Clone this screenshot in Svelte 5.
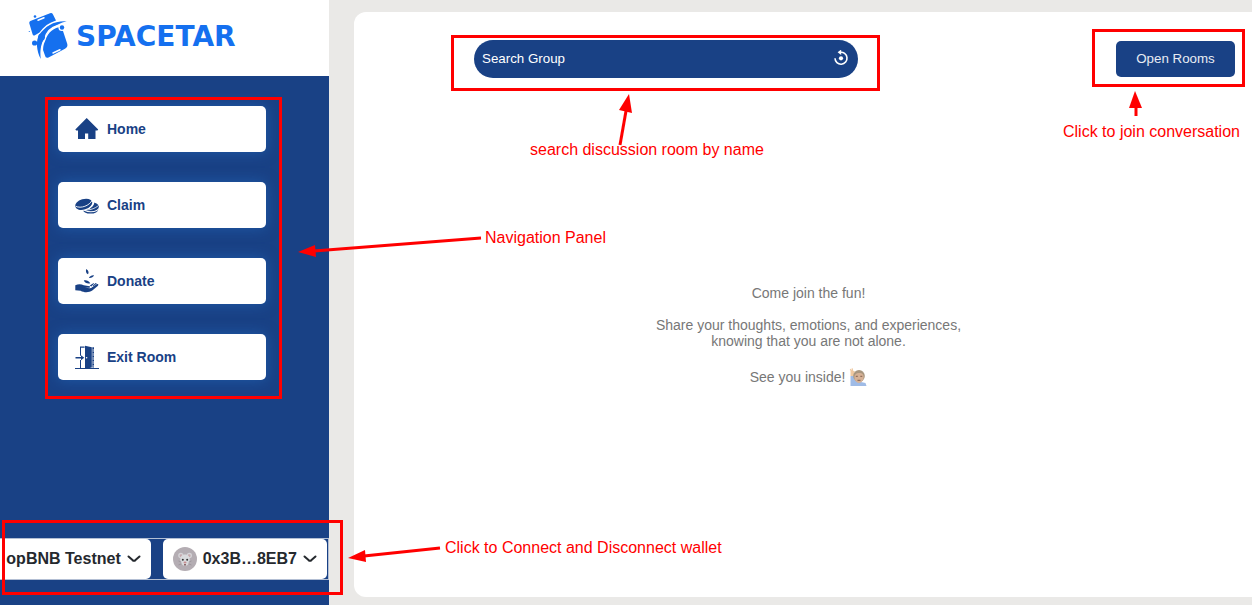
<script>
  const links = [
    { label: 'Home', icon: 'home' },
    { label: 'Claim', icon: 'coins' },
    { label: 'Donate', icon: 'donate' },
    { label: 'Exit Room', icon: 'exit' }
  ];
  let query = $state('');
</script>

{#snippet icon(name)}
  <svg class="icon" viewBox="0 0 24 24" aria-hidden="true">
    {#if name === 'home'}
      <path d="M11.7 1 23.2 12.6 22.4 13.4H20.5V22H13.2V16.4H10V22H3V13.4H1.2L.3 12.6Z" />
    {:else if name === 'coins'}
      <ellipse cx="15.5" cy="16.6" rx="7.8" ry="4" />
      <ellipse cx="15.8" cy="14.6" rx="8.6" ry="4.7" fill="#fff" />
      <ellipse cx="16" cy="13.8" rx="7.9" ry="4.5" />
      <path d="M8 17C15 17.5 20 15.5 23.5 12.5" fill="none" stroke="#fff" stroke-width=".8" />
      <ellipse cx="9.6" cy="10.8" rx="10" ry="6.6" fill="#fff" transform="rotate(-17 9.6 10.8)" />
      <ellipse cx="8.7" cy="11.3" rx="8.8" ry="5.2" transform="rotate(-17 8.7 11.3)" />
      <path d="M.5 13.2C6 16 14.5 12.5 17 7.5" fill="none" stroke="#fff" stroke-width=".9" />
    {:else if name === 'donate'}
      <path d="M.3 16.3C3.5 14.7 6.4 15.2 8.7 16.2L14.6 17.2C15.7 17.9 14.8 18.8 13.6 18.7L9.8 18.4 14.5 19.3C16.8 19.1 18.7 16.7 21.2 15.4 23.2 14.5 24.1 15.4 22.7 16.9L17.3 21.6C13.8 24 8.8 23.7 5.6 21.8L.3 21.3Z" />
      <path d="M14.8 16.5 18.3 14.2 19.3 14.6 16.3 17.4ZM18 16.6 20.7 14 21.8 14.4 18.2 17.5Z" />
      <path d="M11.2 0C13.9 1.7 14 3.8 13 5.3 11.1 4.5 10.5 2.2 11.2 0ZM13.9 9C15 6.8 17 6 19 6.3 18.2 8.3 16.2 9.3 13.9 9ZM8.8 11.4C11.4 10.7 13.8 11.9 15.3 14.2 12.3 14.9 9.8 13.6 8.8 11.4Z" />
    {:else}
      <path d="M10 .7 16.8 2.3V22.6L10 24ZM17.3 2.2H19V22.6H17.3ZM5 1.6H9.6V2.7H6V10.7H5ZM5 15H6V23H5ZM.5 11.9H6V10.2L9.3 12.7 6 15.2V13.5H.5ZM0 23H24V24H0Z" />
      <path d="M18.2 4v18" fill="none" stroke="#fff" stroke-width=".6" stroke-dasharray="3 1" />
      <circle cx="11.6" cy="12.7" r=".8" fill="#fff" />
    {/if}
  </svg>
{/snippet}

{#snippet chevron()}
  <svg class="chevron" viewBox="0 0 14 8" aria-hidden="true"><path d="M1.5 1.5 5.5 5.1Q7 6.3 8.5 5.1L12.5 1.5" /></svg>
{/snippet}

<div class="app">
  <aside>
    <header class="brand">
      <svg class="logo" viewBox="0 0 40 48" aria-hidden="true">
        <path d="M1.5 12Q.6 9.8 3 8.8L22 1.3Q24 .6 25 2.5L28 8.5C21 10.5 15.5 14.5 11.5 20.5L6.5 23.5Q5 24 4.5 22Z" />
        <path d="M17.5 28C20 20 26 16 33.5 14.5L39.3 32Q40 35 37 36.7L20.5 45.5Q17.5 46.5 17 43.5L15 38Q15 32 17.5 28Z" />
        <path d="M38.7 9.2C26 8.5 17.5 14 11.3 22.5 7.5 28.5 8.5 39 12.8 47 11.8 39 12.8 33 15.5 28 19.5 18.5 26.5 12.5 38.7 9.2Z" />
        <path d="m10 8.2 6-2.5M25 41l7-3.2" fill="none" stroke="#fff" stroke-width="1.5" stroke-linecap="round" />
        <path d="M30 13.5C22 15.5 18 21 16.5 27.5 14 32 13.5 38 15.5 45" fill="none" stroke="#fff" stroke-width="1.3" />
        <circle cx="13.5" cy="25.2" r="3.4" />
        <circle cx="6.6" cy="31" r="2.6" />
        <circle cx="34" cy="15.5" r="3.6" fill="#fff" />
        <circle cx="34" cy="15.5" r="2.2" />
        <circle cx="7" cy="4.5" r="1.3" />
        <circle cx="1.3" cy="19.5" r=".6" />
      </svg>
      <span>SPACETAR</span>
    </header>

    <nav class="anchor" aria-label="Main">
      {#each links as link}
        <a href="#{link.icon}">{@render icon(link.icon)}{link.label}</a>
      {/each}
      <svg class="mark" width="1" height="1">
        <rect x="-11.5" y="-7.5" width="234" height="299" />
        <path d="M423 132 256 145" />
        <path class="head" d="m240 146 17-7 1 12Z" />
        <text x="427" y="137">Navigation Panel</text>
      </svg>
    </nav>

    <div class="wallet anchor">
      <div class="accounts">
        <button type="button" aria-haspopup="dialog">opBNB Testnet {@render chevron()}</button>
        <button type="button" aria-haspopup="dialog">
          <svg class="avatar" viewBox="0 0 24 24" aria-hidden="true">
            <circle cx="12" cy="12" r="12" fill="#b4adb3" />
            <circle cx="7.8" cy="8.4" r="2.6" fill="#d3d3d7" /><circle cx="16.4" cy="8.4" r="2.6" fill="#d3d3d7" />
            <circle cx="8" cy="8.7" r="1.4" fill="#c6a9ad" /><circle cx="16.2" cy="8.7" r="1.4" fill="#c6a9ad" />
            <path d="M12 7.5C15.5 7.5 17 10 16.7 13 16.4 16.5 14.6 18.8 12 18.8S7.8 16.5 7.3 13C7 10 8.7 7.5 12 7.5Z" fill="#d9dadd" />
            <path d="m5.5 14 3 1.2M5.5 18l3-1.2m10-2.8-3 1.2m3 2.8-3-1.2" stroke="#918990" stroke-width=".6" />
            <circle cx="9.8" cy="12.8" r="1" fill="#333" /><circle cx="14.2" cy="12.8" r="1" fill="#333" />
            <ellipse cx="12" cy="15.5" rx="1.5" ry=".9" fill="#c98e91" />
            <path d="M11.2 17h1.6v1.5h-1.6Z" fill="#7a4d50" />
          </svg>
          0x3B…8EB7 {@render chevron()}
        </button>
      </div>
      <svg class="mark" width="1" height="1">
        <rect x="3.5" y="-16.5" width="338" height="72" />
        <path d="M440 10 364 18" />
        <path class="head" d="m348 20 17-8 1 12Z" />
        <text x="445" y="15">Click to Connect and Disconnect wallet</text>
      </svg>
    </div>
  </aside>

  <main>
    <section class="panel">
      <div class="toolbar">
        <form class="search anchor" onsubmit={(e) => e.preventDefault()}>
          <input type="text" aria-label="Search Group" placeholder="Search Group" bind:value={query} />
          <button type="button" aria-label="Reset search" onclick={() => (query = '')}>
            <svg viewBox="0 0 16 16" aria-hidden="true">
              <path d="M7 2.3A6 6 0 1 1 2 8.3" fill="none" stroke="#fff" stroke-width="1.6" />
              <path d="M8.2-.5V5L4.6 2.2Z" fill="#fff" /><circle cx="8" cy="8.3" r="2.1" fill="#fff" />
            </svg>
          </button>
          <svg class="mark" width="1" height="1">
            <rect x="-21.5" y="-3.5" width="426" height="53" />
            <path d="M146 105 152 71" />
            <path class="head" d="m155 54-10 16 13 3Z" />
            <text x="56" y="115">search discussion room by name</text>
          </svg>
        </form>
        <div class="anchor">
          <button class="open" type="button">Open Rooms</button>
          <svg class="mark" width="1" height="1">
            <rect x="-22.5" y="-10.5" width="150" height="55" />
            <path d="M20 75V66" />
            <path class="head" d="m19 50-6 17h13Z" />
            <text x="-53" y="96">Click to join conversation</text>
          </svg>
        </div>
      </div>

      <div class="welcome">
        <p>Come join the fun!</p>
        <p>Share your thoughts, emotions, and experiences,<br />knowing that you are not alone.</p>
        <p class="wave">
          See you inside!
          <svg viewBox="0 0 18 18" role="img" aria-label="person raising hand">
            <path d="M1.5 18V8L4.5 7.5 6 12.5l6 1.5 4.5 1 1 3Z" fill="#9fbbe6" />
            <path d="M1.5 8V3L.8 1.2 1.8.8 2.5 2.5 2.7.2h1l.5 2.5L6 3.5 5 5.5V8Z" fill="#efc9a2" />
            <ellipse cx="10" cy="8" rx="5.8" ry="6" fill="#a8967f" />
            <path d="M5.5 8Q7 4.5 10.3 5 13.5 4.5 14.6 8C15 12 12.5 15 10 15S5 12 5.5 8Z" fill="#d6b196" />
            <path d="M6.8 8.3h2m2.5 0h2M8.5 12.3h3" stroke="#80604d" stroke-width="1" />
          </svg>
        </p>
      </div>
    </section>
  </main>
</div>

<style>
  :global(body) { margin: 0; font-family: Helvetica, 'Liberation Sans', Arial, sans-serif; }
  .app { display: flex; min-height: 100vh; overflow: hidden; background: #eae9e7; }
  .anchor { position: relative; }
  button, input { font-family: inherit; border: 0; }
  button { cursor: pointer; }

  aside { position: relative; z-index: 1; display: flex; flex-direction: column; flex: none; width: 329px; background: #194185; }
  .brand { display: flex; align-items: center; gap: 8px; height: 76px; box-sizing: border-box; padding: 0 28px 4px; background: #fff; color: #1570ef; font: bold 28px 'DejaVu Sans', sans-serif; }
  .logo { width: 40px; height: 48px; fill: #1570ef; }

  nav { display: flex; flex-direction: column; gap: 30px; margin: 30px 63px 0 58px; }
  nav a { display: flex; align-items: center; gap: 8px; height: 46px; padding-left: 17px; border-radius: 5px; background: #fff; color: #194185; box-shadow: 0 0 14px #1f5aa8; font-size: 14px; font-weight: bold; text-decoration: none; }
  .icon { width: 24px; height: 24px; fill: #194185; }

  .wallet { margin: auto 0 25px; }
  .accounts { display: flex; justify-content: flex-end; gap: 12px; overflow: hidden; padding-right: 1px; border: solid #b3bfd4; border-width: 1px 1px 1px 0; }
  .accounts button { display: flex; flex: none; align-items: center; gap: 6px; height: 40px; padding: 0 10px; border-radius: 5px; background: #fff; color: #25292e; font-size: 16px; font-weight: bold; }
  .chevron { width: 14px; height: 8px; fill: none; stroke: #25292e; stroke-width: 2; stroke-linecap: round; }
  .avatar { width: 24px; height: 24px; }

  main { display: flex; flex: 1; min-width: 0; padding: 12px 0 8px 25px; }
  .panel { display: flex; flex: 1; flex-direction: column; min-width: 0; border-radius: 12px 0 0 12px; background: #fff; }
  .toolbar { display: flex; align-items: center; justify-content: space-between; padding: 28px 17px 0 120px; }
  .search { display: flex; align-items: center; flex: 0 1 384px; height: 38px; border-radius: 19px; background: #194185; }
  .search input { flex: 1; min-width: 0; height: 36px; padding: 0 8px 2px; border-radius: 19px; background: none; color: #fff; }
  .search input::placeholder { color: #fff; opacity: 1; }
  .search button { padding: 0 9px 2px 0; background: none; }
  .search button svg { display: block; width: 16px; height: 16px; }
  .open { display: block; width: 119px; height: 36px; padding: 0 0 2px; border-radius: 5px; background: #194185; color: #e8ecf3; }

  .welcome { display: flex; flex: 1; flex-direction: column; justify-content: center; gap: 16px; padding: 0 0 2px 11px; color: #777; font-size: 14px; line-height: 16px; text-align: center; }
  p { margin: 0; }
  .wave { display: flex; justify-content: center; align-items: center; gap: 4px; height: 24px; }
  .wave svg { width: 18px; height: 18px; }

  .mark { position: absolute; top: 0; left: 0; overflow: visible; pointer-events: none; fill: none; stroke: #f00; stroke-width: 3; }
  .mark .head { fill: #f00; stroke: none; }
  .mark text { fill: #f00; stroke: none; font-size: 16px; }
</style>
